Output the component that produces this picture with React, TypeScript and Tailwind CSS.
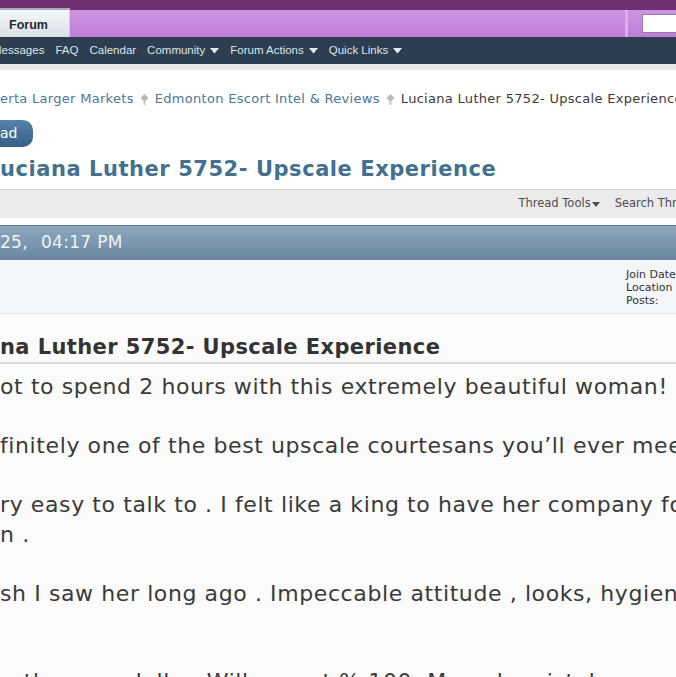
import React from "react";

const navItems = [
  { label: "Messages", menu: false },
  { label: "FAQ", menu: false },
  { label: "Calendar", menu: false },
  { label: "Community", menu: true },
  { label: "Forum Actions", menu: true },
  { label: "Quick Links", menu: true },
];

const crumbs = ["erta Larger Markets", "Edmonton Escort Intel & Reviews"];

const bodyLines = [
  "ot to spend 2 hours with this extremely beautiful woman!",
  "",
  "finitely one of the best upscale courtesans you\u2019ll ever meet",
  "",
  "ry easy to talk to . I felt like a king to have her company for",
  "n .",
  "",
  "sh I saw her long ago . Impeccable attitude , looks, hygiene",
  "",
  "",
  "orth every dollar. Will repeat % 100. My only mistake was not",
];

function Arrow() {
  return (
    <svg width="9" height="6" viewBox="0 0 9 6" className="ml-[5px] inline-block">
      <path d="M0 0 L9 0 L4.5 5.5 Z" fill="#e6ecf1" />
    </svg>
  );
}

function CrumbSep() {
  return (
    <svg width="9" height="11" viewBox="0 0 9 11" className="mx-[6px] inline-block">
      <path d="M4.5 0 L8.5 4 L4.5 8 L0.5 4 Z" fill="#b9b9b9" />
      <path d="M4.5 7 L4.5 11" stroke="#c9c9c9" strokeWidth="2" />
    </svg>
  );
}

export default function App() {
  return (
    <div className="w-[676px] h-[677px] overflow-hidden bg-white font-['DejaVu_Sans',sans-serif]">
      {/* top header */}
      <div className="h-[37px] bg-[#6f3270] flex items-end">
        <div className="w-[70px] h-[29px] bg-gradient-to-b from-[#f6f8fa] to-[#d9dfe4] border-t-2 border-[#9fb0bf] border-r border-r-[#c9d1d8] flex items-center pl-[9px] pt-[3px] text-[12.5px] font-bold text-[#1f2a33] font-['Liberation_Sans',sans-serif]">
          Forum
        </div>
        <div className="flex-1 h-[27px] bg-gradient-to-b from-[#cf93e4] to-[#bf7ed6] flex items-center">
          <div className="flex-1" />
          <div className="w-[3px] h-full bg-[#d9b1e8]" />
          <div className="w-[14px]" />
          <div className="w-[34px] h-[19px] bg-white border border-[#9a7aa8] border-r-0" />
        </div>
      </div>

      {/* nav bar */}
      <div className="h-[27px] bg-[#2c3e4f] flex items-center ml-[-8px] gap-[11px] pt-[1px] text-[11.5px] text-[#dde5ec] font-['Liberation_Sans',sans-serif] whitespace-nowrap">
        {navItems.map((n) => (
          <span key={n.label} className="flex items-center">
            {n.label}
            {n.menu && <Arrow />}
          </span>
        ))}
      </div>
      <div className="h-[6px] bg-[#e8e8e8]" />

      {/* breadcrumb */}
      <div className="mt-[20px] h-[18px] leading-[18px] text-[13px] tracking-[0.3px] whitespace-nowrap flex items-center">
        {crumbs.map((c) => (
          <span key={c} className="flex items-center text-[#4a7899]">
            {c}
            <CrumbSep />
          </span>
        ))}
        <span className="text-[#3b3b3b]">Luciana Luther 5752- Upscale Experience</span>
      </div>

      {/* reply button */}
      <div className="mt-[12px] w-[33px] h-[27px] rounded-r-[10px] bg-gradient-to-b from-[#5583a9] to-[#355f86] text-white text-[14px] flex items-center">
        ad
      </div>

      {/* thread title */}
      <div className="mt-[9px] h-[26px] leading-[26px] text-[21px] tracking-[0.55px] font-bold text-[#41718f] whitespace-nowrap">
        uciana Luther 5752- Upscale Experience
      </div>

      {/* thread tools bar */}
      <div className="mt-[7px] h-[29px] bg-[#ebebeb] border-t border-[#d6d6d6] flex items-center whitespace-nowrap text-[11.5px] text-[#4d4d4d] overflow-hidden">
        <div className="flex-1" />
        <span className="flex items-center">
          Thread Tools
          <svg width="8" height="5" viewBox="0 0 8 5" className="ml-[1px]">
            <path d="M0 0 L8 0 L4 5 Z" fill="#4d4d4d" />
          </svg>
        </span>
        <span className="ml-[15px] mr-[-22px]">Search Thread</span>
      </div>

      {/* post header */}
      <div className="mt-[7px] h-[35px] bg-gradient-to-b from-[#8ea7bc] to-[#6a87a1] border-t border-[#5c7891] flex items-center text-[17px] tracking-[0.3px] text-[#eef3f7] whitespace-pre">
        <span>25,</span>
        <span className="ml-[13px]">04:17 PM</span>
      </div>

      {/* user info */}
      <div className="h-[54px] bg-[#f3f6f9] border-b border-[#e2e6ea] flex">
        <div className="flex-1" />
        <div className="w-[50px] pt-[8px] text-[11px] leading-[13px] text-[#333] whitespace-nowrap">
          <div>Join Date</div>
          <div>Location</div>
          <div>Posts:</div>
        </div>
      </div>

      {/* post body */}
      <div className="bg-[#fbfbfb] pt-[20px] h-[400px]">
        <div className="h-[26px] leading-[26px] text-[21px] tracking-[0.4px] font-bold text-[#333] whitespace-nowrap">
          na Luther 5752- Upscale Experience
        </div>
        <div className="mt-[2px] h-[2px] bg-[#d9d9d9]" />
        <div className="mt-[8px] text-[22px] tracking-[0.6px] leading-[29.5px] text-[#3a3a3a] whitespace-nowrap">
          {bodyLines.map((l, i) => (
            <div key={i} className="h-[29.5px]">
              {l}
            </div>
          ))}
        </div>
      </div>
    </div>
  );
}
